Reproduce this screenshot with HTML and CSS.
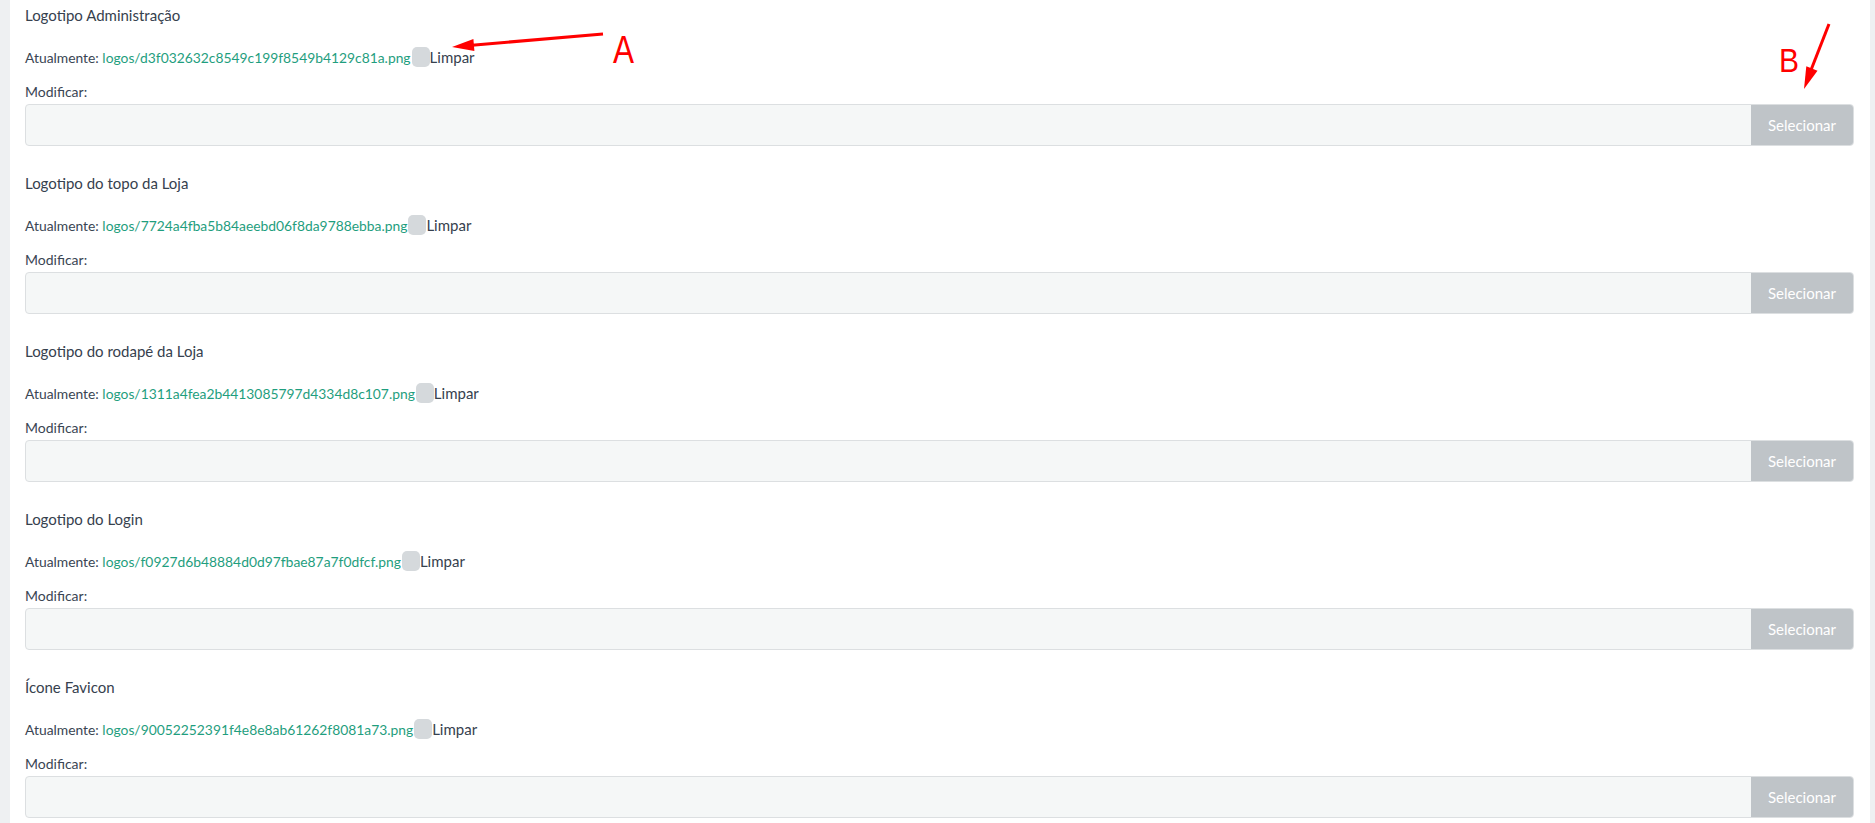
FILE: index.html
```html
<!DOCTYPE html>
<html lang="pt">
<head>
<meta charset="utf-8">
<title>Logotipos</title>
<link rel="stylesheet" href="styles.css">
</head>
<body>
<div class="page">
  <div class="side-left"></div>
  <main class="content">
    <section class="field">
      <div class="field-title">Logotipo Administração</div>
      <div class="current"><span class="current-label">Atualmente:</span> <a class="file-link">logos/d3f032632c8549c199f8549b4129c81a.png</a><span class="clear-box"></span><span class="clear-label">Limpar</span></div>
      <div class="change-label">Modificar:</div>
      <div class="file-input"><div class="file-name"></div><div class="file-btn">Selecionar</div></div>
    </section>
    <section class="field">
      <div class="field-title">Logotipo do topo da Loja</div>
      <div class="current"><span class="current-label">Atualmente:</span> <a class="file-link">logos/7724a4fba5b84aeebd06f8da9788ebba.png</a><span class="clear-box"></span><span class="clear-label">Limpar</span></div>
      <div class="change-label">Modificar:</div>
      <div class="file-input"><div class="file-name"></div><div class="file-btn">Selecionar</div></div>
    </section>
    <section class="field">
      <div class="field-title">Logotipo do rodapé da Loja</div>
      <div class="current"><span class="current-label">Atualmente:</span> <a class="file-link">logos/1311a4fea2b4413085797d4334d8c107.png</a><span class="clear-box"></span><span class="clear-label">Limpar</span></div>
      <div class="change-label">Modificar:</div>
      <div class="file-input"><div class="file-name"></div><div class="file-btn">Selecionar</div></div>
    </section>
    <section class="field">
      <div class="field-title">Logotipo do Login</div>
      <div class="current"><span class="current-label">Atualmente:</span> <a class="file-link">logos/f0927d6b48884d0d97fbae87a7f0dfcf.png</a><span class="clear-box"></span><span class="clear-label">Limpar</span></div>
      <div class="change-label">Modificar:</div>
      <div class="file-input"><div class="file-name"></div><div class="file-btn">Selecionar</div></div>
    </section>
    <section class="field">
      <div class="field-title">Ícone Favicon</div>
      <div class="current"><span class="current-label">Atualmente:</span> <a class="file-link">logos/90052252391f4e8e8ab61262f8081a73.png</a><span class="clear-box"></span><span class="clear-label">Limpar</span></div>
      <div class="change-label">Modificar:</div>
      <div class="file-input"><div class="file-name"></div><div class="file-btn">Selecionar</div></div>
    </section>
  </main>
  <div class="side-right"></div>
</div>
<svg class="annotations" width="1875" height="823" viewBox="0 0 1875 823">
  <line x1="603" y1="34" x2="472" y2="45.2" stroke="#ff0000" stroke-width="3"/>
  <polygon points="452,47 474.4,51.1 473.4,39.1" fill="#ff0000"/>
  <text x="613" y="63" font-family="Liberation Sans, Arial, sans-serif" font-size="39" fill="#ff0000" textLength="21" lengthAdjust="spacingAndGlyphs">A</text>
  <line x1="1829" y1="24" x2="1811" y2="70" stroke="#ff0000" stroke-width="3"/>
  <polygon points="1804,89 1817.5,70.7 1806.3,66.3" fill="#ff0000"/>
  <text x="1779" y="72" font-family="Liberation Sans, Arial, sans-serif" font-size="33" fill="#ff0000" textLength="20" lengthAdjust="spacingAndGlyphs">B</text>
</svg>
</body>
</html>
```
FILE: styles.css
```css
html, body {
  margin: 0;
  padding: 0;
  background: #ffffff;
  font-family: Lato, "Open Sans", sans-serif;
  color: #3a4553;
}

.page {
  display: flex;
  min-height: 823px;
}

.side-left {
  width: 10px;
  flex: 0 0 10px;
  background: #eef0f2;
}

.side-right {
  width: 5px;
  flex: 0 0 5px;
  background: #eef0f2;
}

.content {
  flex: 1;
  padding: 5px 16px 0 15px;
}

.field {
  display: flex;
  flex-direction: column;
  padding-bottom: 27px;
}

.field-title {
  font-size: 15px;
  line-height: 20px;
  color: #36414e;
}

.current {
  margin-top: 22px;
  height: 20px;
  line-height: 20px;
  font-size: 13.85px;
  white-space: nowrap;
}

.current-label {
  color: #3a4553;
}

.file-link {
  color: #1f9e7e;
  text-decoration: none;
}

.clear-box {
  display: inline-block;
  width: 18px;
  height: 20px;
  border-radius: 5px;
  background: #d5d9dc;
  margin-left: 1px;
  vertical-align: top;
}

.clear-label {
  font-size: 15px;
  color: #36414e;
}

.change-label {
  margin-top: 16px;
  font-size: 14px;
  line-height: 18px;
  color: #3a4553;
}

.file-input {
  margin-top: 3px;
  display: flex;
  height: 42px;
  box-sizing: border-box;
  border: 1px solid #dcdfe1;
  border-radius: 4px;
  overflow: hidden;
  background: #f5f7f7;
}

.file-name {
  flex: 1;
}

.file-btn {
  width: 102px;
  display: flex;
  align-items: center;
  justify-content: center;
  background: #bfc4c8;
  color: #ffffff;
  font-size: 15px;
}

.annotations {
  position: absolute;
  left: 0;
  top: 0;
  pointer-events: none;
}
```
